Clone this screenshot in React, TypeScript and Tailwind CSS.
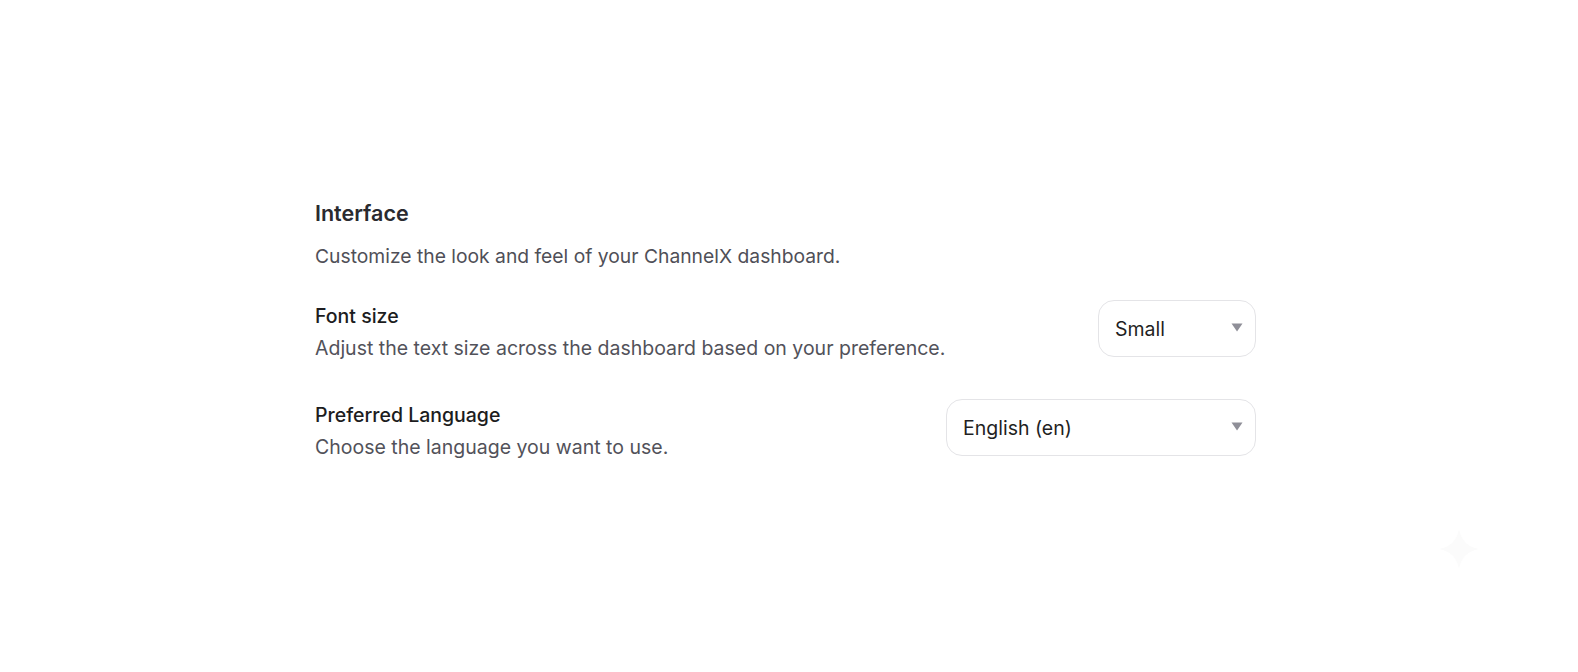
import React from "react";

type SelectProps = {
  value: string;
  width: string;
};

function FakeSelect({ value, width }: SelectProps) {
  return (
    <div
      className={`${width} h-[57px] shrink-0 flex items-center justify-between rounded-2xl border border-[#e4e4e7] bg-white pl-[16px] pr-[12px]`}
    >
      <span className="text-[19.5px] leading-7 text-[#1f1f23]">{value}</span>
      <svg width="12" height="9" viewBox="0 0 12 9" className="mt-[-2px]">
        <path d="M0.5 0.5 H11.5 L6 8.5 Z" fill="#8f8f98" />
      </svg>
    </div>
  );
}

type RowProps = {
  label: string;
  hint: string;
  children: React.ReactNode;
};

function SettingRow({ label, hint, children }: RowProps) {
  return (
    <div className="flex items-start justify-between">
      <div className="pt-[2px]">
        <p className="text-[19.5px] leading-7 font-medium text-[#1c1c20]">{label}</p>
        <p className="mt-1 text-[19.5px] leading-7 text-[#52525a]">{hint}</p>
      </div>
      {children}
    </div>
  );
}

export default function App() {
  return (
    <div
      className="relative min-h-[672px] w-full bg-white"
      style={{ fontFamily: "Inter, 'Noto Sans', sans-serif" }}
    >
      <div className="pl-[315px] pt-[199px]">
        <div className="w-[941px]">
          {/* HEADER */}
          <h2 className="text-[21.5px] leading-7 font-semibold text-[#2a2a2f]">Interface</h2>
          <p className="mt-[15px] text-[19.3px] leading-7 text-[#4f4f57]">
            Customize the look and feel of your ChannelX dashboard.
          </p>

          {/* SETTINGS */}
          <div className="mt-[30px] flex flex-col gap-[37px]">
            <SettingRow
              label="Font size"
              hint="Adjust the text size across the dashboard based on your preference."
            >
              <FakeSelect value="Small" width="w-[158px]" />
            </SettingRow>

            <SettingRow label="Preferred Language" hint="Choose the language you want to use.">
              <FakeSelect value="English (en)" width="w-[310px]" />
            </SettingRow>
          </div>
        </div>
      </div>

      {/* faint sparkle */}
      <svg
        width="44"
        height="44"
        viewBox="0 0 44 44"
        className="absolute left-[1437px] top-[527px]"
      >
        <path d="M22 2 Q25 19 42 22 Q25 25 22 42 Q19 25 2 22 Q19 19 22 2 Z" fill="#fbfbfb" />
      </svg>
    </div>
  );
}
